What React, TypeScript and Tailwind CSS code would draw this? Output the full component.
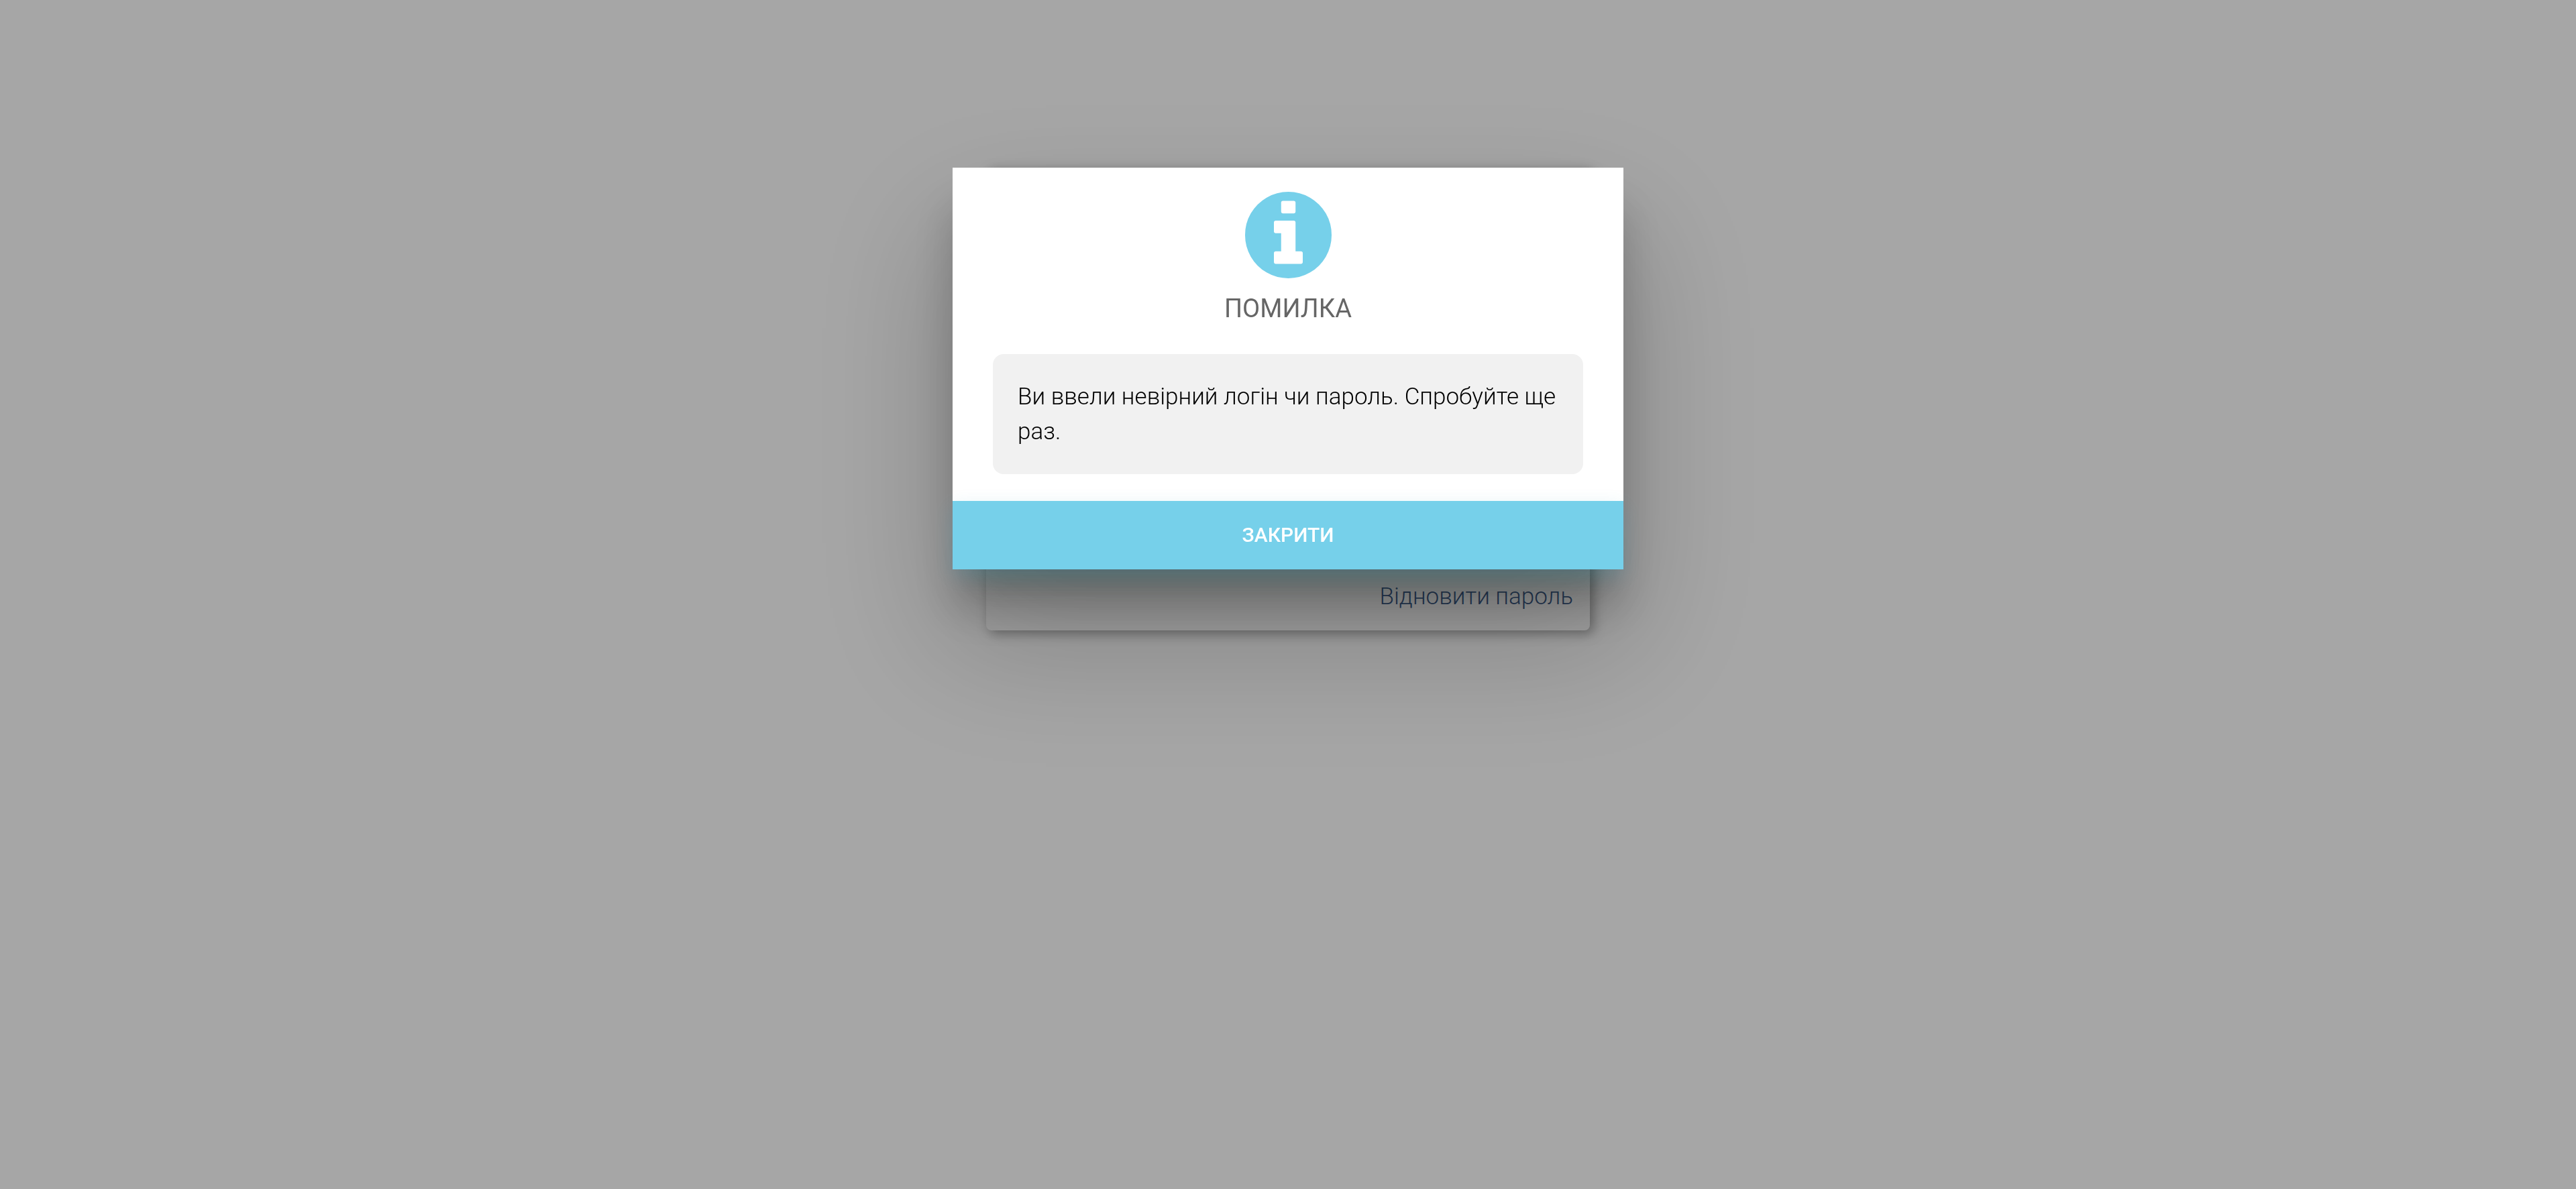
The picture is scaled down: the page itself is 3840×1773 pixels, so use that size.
export default function App() {
  return (
    <div className="min-h-screen bg-white font-['Roboto',sans-serif] font-light text-[35px] leading-[52px] text-black">
      <main className="flex justify-center pt-[250px]">
        <section className="flex min-h-[690px] w-full max-w-[900px] flex-col items-end justify-end rounded-lg bg-white px-[25px] pb-6 shadow-[5px_5px_18px_rgba(0,0,0,0.35)]">
          <a href="#restore" className="text-[#3f5f8e]">
            Відновити пароль
          </a>
        </section>
      </main>

      <div className="fixed inset-0 flex items-start justify-center bg-black/35 pt-[250px]">
        <div
          role="dialog"
          aria-modal="true"
          aria-labelledby="dialog-title"
          aria-describedby="dialog-text"
          className="flex w-full max-w-[1000px] flex-col bg-white shadow-[0_60px_60px_rgba(0,0,0,0.2),0_100px_192px_20px_rgba(0,0,0,0.2)]"
        >
          <div className="flex flex-col items-center px-[60px] pt-9 pb-10">
            <svg
              viewBox="128 128 1536 1536"
              className="size-[129px] fill-[#76d0ea]"
              aria-hidden="true"
            >
              <path d="M1152 1376v-160q0-14-9-23t-23-9h-96v-512q0-14-9-23t-23-9h-320q-14 0-23 9t-9 23v160q0 14 9 23t23 9h96v320h-96q-14 0-23 9t-9 23v160q0 14 9 23t23 9h448q14 0 23-9t9-23zM1024 480v-160q0-14-9-23t-23-9h-192q-14 0-23 9t-9 23v160q0 14 9 23t23 9h192q14 0 23-9t9-23zM1664 896q0 209-103 385.5t-279.5 279.5-385.5 103-385.5-103-279.5-279.5-103-385.5 103-385.5 279.5-279.5 385.5-103 385.5 103 279.5 279.5 103 385.5z" />
            </svg>
            <h1
              id="dialog-title"
              className="mt-4 text-[38px] leading-[58px] font-normal text-[#666]"
            >
              ПОМИЛКА
            </h1>
            <p
              id="dialog-text"
              className="mt-[39px] w-full rounded-2xl bg-[#f1f1f1] px-[37px] pt-[38px] pb-[37px]"
            >
              Ви ввели невірний логін чи пароль. Спробуйте ще раз.
            </p>
          </div>
          <button
            type="button"
            className="h-[102px] w-full bg-[#76d0ea] text-[30px] font-medium text-white shadow-[0_10px_26px_rgba(60,160,190,0.22),0_40px_50px_-30px_rgba(0,50,40,0.3)]"
          >
            ЗАКРИТИ
          </button>
        </div>
      </div>
    </div>
  );
}
